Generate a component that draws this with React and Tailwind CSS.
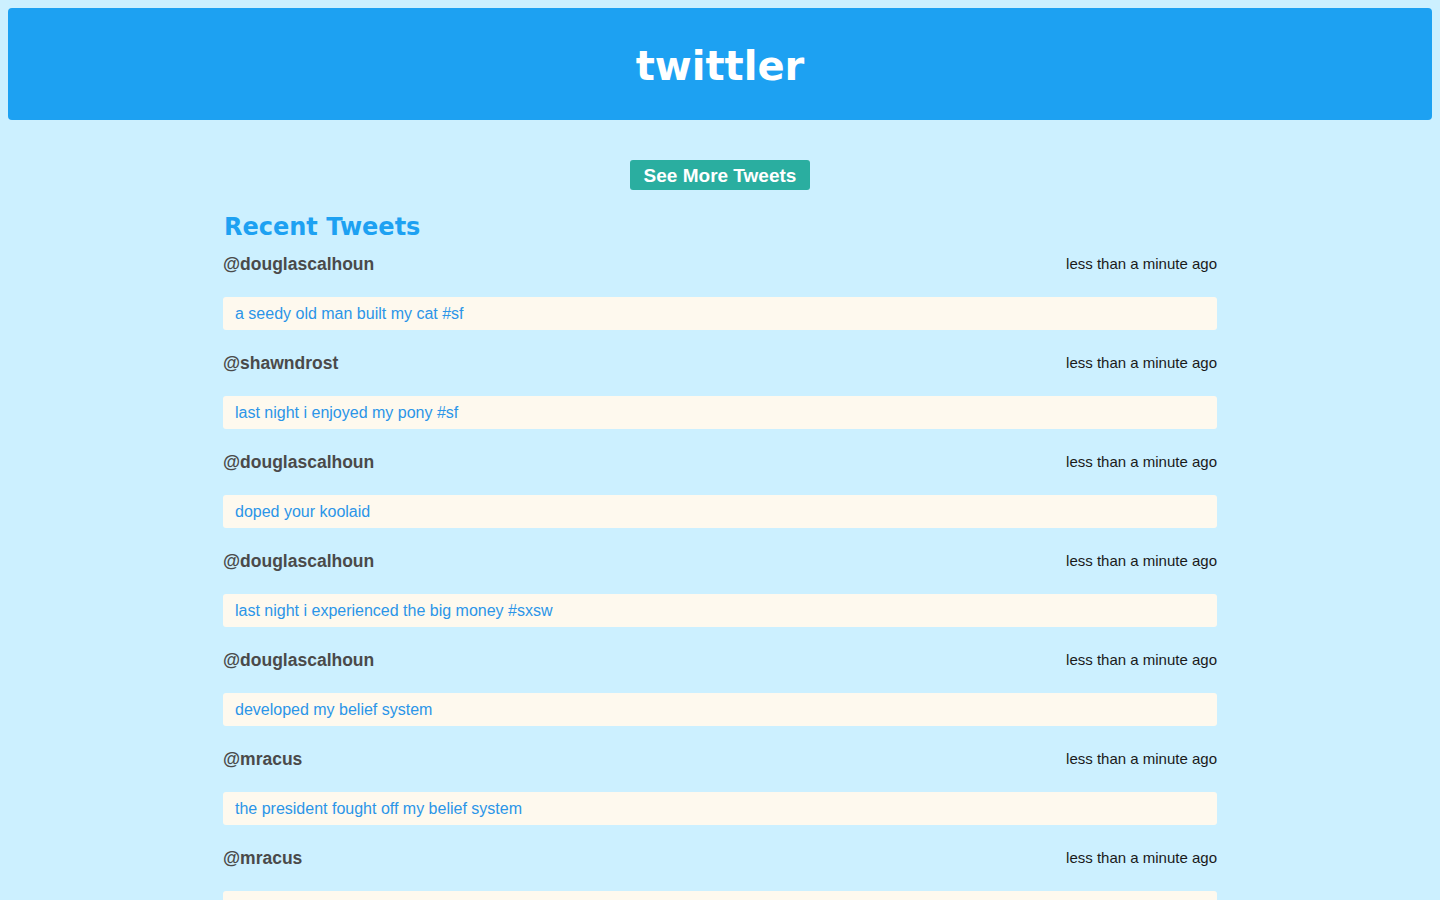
import React from "react";

const tweets = [
  ["douglascalhoun", "a seedy old man built my cat #sf"],
  ["shawndrost", "last night i enjoyed my pony #sf"],
  ["douglascalhoun", "doped your koolaid"],
  ["douglascalhoun", "last night i experienced the big money #sxsw"],
  ["douglascalhoun", "developed my belief system"],
  ["mracus", "the president fought off my belief system"],
  ["mracus", "just bought a new pony #sxsw"],
  ["shawndrost", "ate my koolaid"],
];

export default function App() {
  return (
    <div className="min-h-screen bg-[#ccf0ff] pt-2 pb-10" style={{ fontFamily: '"Liberation Sans", Arial, sans-serif' }}>
      <header className="mx-2 h-[112px] rounded-[4px] bg-[#1da1f2] flex items-center justify-center">
        <h1 className="text-white font-bold text-[40px] leading-none pt-[3px]" style={{ fontFamily: '"DejaVu Sans", Verdana, sans-serif' }}>
          twittler
        </h1>
      </header>
      <div className="flex justify-center mt-10">
        <button className="h-[30px] w-[180px] rounded-[3px] bg-[#2aaea0] text-white font-bold text-[19px] leading-none flex items-center justify-center">
          See More Tweets
        </button>
      </div>
      <main className="w-[994px] mx-auto mt-[22px]">
        <h2 className="text-[#1da1f2] font-bold text-[24px] leading-[30px] pl-[1px]" style={{ fontFamily: '"DejaVu Sans", Verdana, sans-serif' }}>
          Recent Tweets
        </h2>
        <div className="mt-3 flex flex-col">
          {tweets.map(([u, t], i) => (
            <div key={i} className="flex flex-col">
              <div className="h-5 flex items-center justify-between">
                <span className="font-bold text-[17.5px] text-[#4a4a4a]">@{u}</span>
                <span className="text-[15px] text-[#1a1a1a]">less than a minute ago</span>
              </div>
              <div className="mt-[23px] mb-[23px] h-[33px] rounded-[3px] bg-[#fef9ee] px-3 flex items-center text-[16px] text-[#2b95e8]">
                {t}
              </div>
            </div>
          ))}
        </div>
      </main>
    </div>
  );
}
